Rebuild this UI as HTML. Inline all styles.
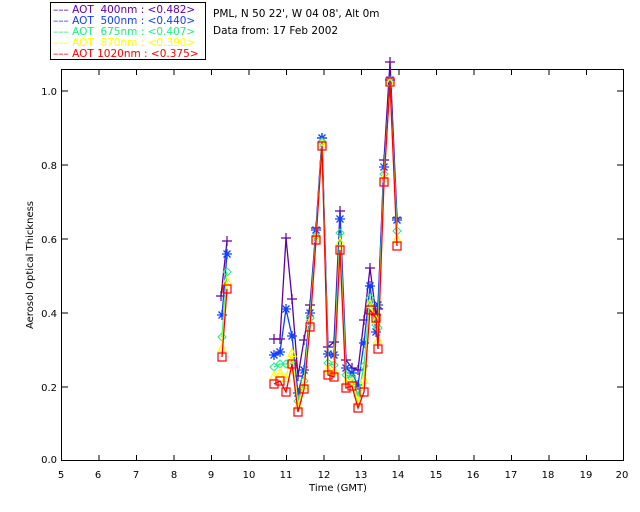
<!DOCTYPE html>
<html><head><style>
html,body{margin:0;padding:0;background:#fff;}
svg{display:block;font-family:"DejaVu Sans","Liberation Sans",sans-serif;}
</style></head><body>
<svg width="640" height="512" viewBox="0 0 640 512" xmlns="http://www.w3.org/2000/svg">
<defs>
<marker id="mp" markerUnits="userSpaceOnUse" markerWidth="12" markerHeight="12" refX="6" refY="6" overflow="visible"><path d="M1 6H11M6 1V11" stroke="#6000a0" stroke-width="1.2" fill="none"/></marker>
<marker id="mb" markerUnits="userSpaceOnUse" markerWidth="12" markerHeight="12" refX="6" refY="6" overflow="visible"><path d="M1 6H11M6 1V11M2.5 2.5L9.5 9.5M9.5 2.5L2.5 9.5" stroke="#1040ff" stroke-width="1.3" fill="none"/></marker>
<marker id="mg" markerUnits="userSpaceOnUse" markerWidth="12" markerHeight="12" refX="6" refY="6" overflow="visible"><path d="M6 2L10 6L6 10L2 6Z" stroke="#20f080" stroke-width="1" fill="none"/></marker>
<marker id="my" markerUnits="userSpaceOnUse" markerWidth="12" markerHeight="12" refX="6" refY="6" overflow="visible"><path d="M6 1.5L10 9.5H2Z" stroke="#ffff00" stroke-width="1.2" fill="none"/></marker>
<marker id="mr" markerUnits="userSpaceOnUse" markerWidth="12" markerHeight="12" refX="6" refY="6" overflow="visible"><rect x="2" y="2" width="8" height="8" stroke="#ff0000" stroke-width="1.2" fill="none"/></marker>
</defs>

<rect x="50.5" y="2.5" width="155" height="57" fill="none" stroke="#000"/>
<g font-size="10.5">
<text x="53" y="13" fill="#6000a0">––– AOT&#160; 400nm : &lt;0.482&gt;</text>
<text x="53" y="24" fill="#1040ff">––– AOT&#160; 500nm : &lt;0.440&gt;</text>
<text x="53" y="35" fill="#20f080">––– AOT&#160; 675nm : &lt;0.407&gt;</text>
<text x="53" y="46" fill="#ffff00">––– AOT&#160; 870nm : &lt;0.390&gt;</text>
<text x="53" y="57" fill="#ff0000">––– AOT 1020nm : &lt;0.375&gt;</text>
</g>
<g font-size="10.5" fill="#000">
<text x="213" y="17">PML, N 50 22', W 04 08', Alt 0m</text>
<text x="213" y="34">Data from: 17 Feb 2002</text>
</g>

<rect x="61.5" y="69.5" width="562" height="391" fill="none" stroke="#000"/>
<g stroke="#000">
<path d="M99 461v-6M136.5 461v-6M174 461v-6M211.5 461v-6M249 461v-6M286.5 461v-6M324 461v-6M361.5 461v-6M399 461v-6M436.5 461v-6M474 461v-6M511.5 461v-6M549 461v-6M586.5 461v-6"/>
<path d="M99 69v6M136.5 69v6M174 69v6M211.5 69v6M249 69v6M286.5 69v6M324 69v6M361.5 69v6M399 69v6M436.5 69v6M474 69v6M511.5 69v6M549 69v6M586.5 69v6"/>
<path d="M61 387h7M61 313h7M61 239h7M61 165h7M61 91h7M624 387h-7M624 313h-7M624 239h-7M624 165h-7M624 91h-7"/>
</g>
<g font-size="10" fill="#000" text-anchor="middle">
<text x="61" y="478">5</text><text x="98" y="478">6</text><text x="136" y="478">7</text><text x="174" y="478">8</text><text x="211" y="478">9</text><text x="249" y="478">10</text><text x="286" y="478">11</text><text x="324" y="478">12</text><text x="361" y="478">13</text><text x="398" y="478">14</text><text x="436" y="478">15</text><text x="473" y="478">16</text><text x="511" y="478">17</text><text x="548" y="478">18</text><text x="586" y="478">19</text><text x="622" y="478">20</text>
<text x="338" y="491">Time (GMT)</text>
</g>
<g font-size="10" fill="#000" text-anchor="end">
<text x="57" y="463">0.0</text><text x="57" y="391">0.2</text><text x="57" y="317">0.4</text><text x="57" y="243">0.6</text><text x="57" y="169">0.8</text><text x="57" y="95">1.0</text>
</g>
<text transform="translate(33,265) rotate(-90)" font-size="10" text-anchor="middle" fill="#000">Aerosol Optical Thickness</text>

<g fill="none" stroke-width="1.3">
<polyline stroke="#6000a0" marker-start="url(#mp)" marker-end="url(#mp)" points="221,296 227,241"/>
<polyline stroke="#6000a0" marker-start="url(#mp)" marker-mid="url(#mp)" marker-end="url(#mp)" points="274,339 280,339 286,238 292,299 298,376 304,340 310,305 316,228 322,138 328,347 334,342 340,211 346,360 352,368 358,370 364,320 370,268 376,315 378,309 384,160 390,62 397,218"/>
<polyline stroke="#1040ff" marker-start="url(#mb)" marker-end="url(#mb)" points="222,315 227,254"/>
<polyline stroke="#1040ff" marker-start="url(#mb)" marker-mid="url(#mb)" marker-end="url(#mb)" points="274,355 280,352 286,309 292,336 298,393 304,370 310,313 316,230 322,138 328,354 334,355 340,219 346,368 352,373 358,385 364,343 370,286 376,332 378,305 384,167 390,80 397,220"/>
<polyline stroke="#20f080" marker-start="url(#mg)" marker-end="url(#mg)" points="222,337 227,272"/>
<polyline stroke="#20f080" marker-start="url(#mg)" marker-mid="url(#mg)" marker-end="url(#mg)" points="274,367 280,364 286,364 292,361 298,401 304,381 310,318 316,236 322,142 328,363 334,365 340,233 346,375 352,378 358,396 364,366 370,298 376,325 378,328 384,174 390,84 397,231"/>
<polyline stroke="#ffff00" marker-start="url(#my)" marker-end="url(#my)" points="222,348 227,281"/>
<polyline stroke="#ffff00" marker-start="url(#my)" marker-mid="url(#my)" marker-end="url(#my)" points="274,376 280,373 286,378 292,353 298,406 304,385 310,322 316,238 322,144 328,369 334,371 340,242 346,382 352,382 358,402 364,380 370,304 376,320 378,340 384,178 390,82 397,239"/>
<polyline stroke="#ff0000" marker-start="url(#mr)" marker-end="url(#mr)" points="222,357 227,289"/>
<polyline stroke="#ff0000" marker-start="url(#mr)" marker-mid="url(#mr)" marker-end="url(#mr)" points="274,384 280,381 286,392 292,364 298,412 304,389 310,327 316,240 322,146 328,375 334,377 340,250 346,388 352,386 358,408 364,392 370,310 376,318 378,349 384,182 390,82 397,246"/>
</g>
</svg>
</body></html>
